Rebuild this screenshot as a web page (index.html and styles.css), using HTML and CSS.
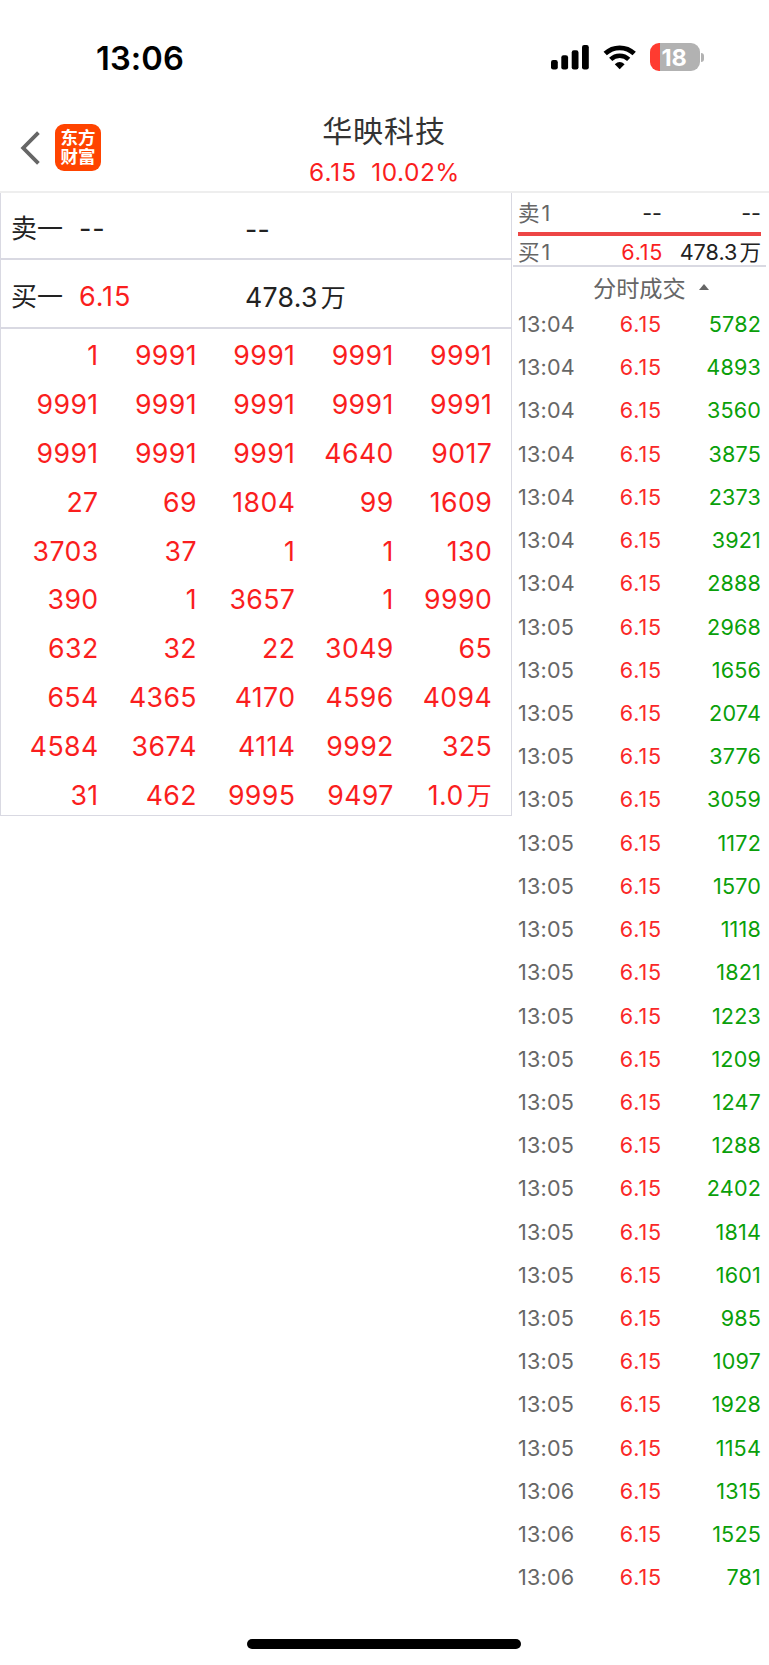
FILE: index.html
```html
<!DOCTYPE html>
<html lang="zh-CN">
  <head>
    <meta charset="utf-8">
    <title>华映科技</title>
    <link rel="stylesheet" href="styles.css">
  </head>
  <body>
    <div class="status-bar">
      <span class="clock">13:06</span>
      <div class="status-icons">
        <svg class="signal" width="38" height="25" viewBox="0 0 38 25">
          <rect x="0" y="15" width="6.8" height="9.4" rx="2.2"/>
          <rect x="10.3" y="10.3" width="6.8" height="14.1" rx="2.2"/>
          <rect x="20.7" y="5.3" width="6.8" height="19.1" rx="2.2"/>
          <rect x="31" y="0" width="6.8" height="24.4" rx="2.2"/>
        </svg>
        <svg class="wifi" width="34" height="25" viewBox="0 0 34 25">
          <path d="M2.2 8.6 A21 21 0 0 1 31.2 8.6" fill="none" stroke="#000" stroke-width="4.8"/>
          <path d="M7.7 14.4 A13 13 0 0 1 25.7 14.4" fill="none" stroke="#000" stroke-width="4.6"/>
          <path d="M11.8 19.2 Q16.7 14.8 21.6 19.2 L16.7 24.2 Z"/>
        </svg>
        <div class="battery"><span>18</span></div>
        <div class="battery-cap"></div>
      </div>
    </div>

    <div class="header">
      <div class="header-left">
        <svg class="back" width="20" height="36" viewBox="0 0 20 36">
          <path d="M18.4 2.6 L3.2 18 L18.4 33.4" fill="none" stroke="#666" stroke-width="3.8"/>
        </svg>
        <div class="logo">东方<br>财富</div>
      </div>
      <div class="title">
        <div class="name">华映科技</div>
        <div class="quote"><span class="last">6.15</span><span>10.02%</span></div>
      </div>
    </div>

    <div class="content">
      <div class="queue">
        <div class="level"><span class="side">卖一</span><span class="price none">--</span><span class="volume">--</span></div>
        <div class="level"><span class="side">买一</span><span class="price">6.15</span><span class="volume">478.3<i>万</i></span></div>
        <div class="orders">
          <span>1</span><span>9991</span><span>9991</span><span>9991</span><span>9991</span>
          <span>9991</span><span>9991</span><span>9991</span><span>9991</span><span>9991</span>
          <span>9991</span><span>9991</span><span>9991</span><span>4640</span><span>9017</span>
          <span>27</span><span>69</span><span>1804</span><span>99</span><span>1609</span>
          <span>3703</span><span>37</span><span>1</span><span>1</span><span>130</span>
          <span>390</span><span>1</span><span>3657</span><span>1</span><span>9990</span>
          <span>632</span><span>32</span><span>22</span><span>3049</span><span>65</span>
          <span>654</span><span>4365</span><span>4170</span><span>4596</span><span>4094</span>
          <span>4584</span><span>3674</span><span>4114</span><span>9992</span><span>325</span>
          <span>31</span><span>462</span><span>9995</span><span>9497</span><span>1.0<i>万</i></span>
        </div>
      </div>

      <div class="ticks">
        <div class="best sell"><span>卖<i>1</i></span><span>--</span><span>--</span></div>
        <div class="ratio"></div>
        <div class="best buy"><span>买<i>1</i></span><span class="up">6.15</span><span>478.3<i>万</i></span></div>
        <div class="ticks-title">分时成交<span class="arrow"></span></div>
        <div class="tick"><span>13:04</span><span>6.15</span><span>5782</span></div>
        <div class="tick"><span>13:04</span><span>6.15</span><span>4893</span></div>
        <div class="tick"><span>13:04</span><span>6.15</span><span>3560</span></div>
        <div class="tick"><span>13:04</span><span>6.15</span><span>3875</span></div>
        <div class="tick"><span>13:04</span><span>6.15</span><span>2373</span></div>
        <div class="tick"><span>13:04</span><span>6.15</span><span>3921</span></div>
        <div class="tick"><span>13:04</span><span>6.15</span><span>2888</span></div>
        <div class="tick"><span>13:05</span><span>6.15</span><span>2968</span></div>
        <div class="tick"><span>13:05</span><span>6.15</span><span>1656</span></div>
        <div class="tick"><span>13:05</span><span>6.15</span><span>2074</span></div>
        <div class="tick"><span>13:05</span><span>6.15</span><span>3776</span></div>
        <div class="tick"><span>13:05</span><span>6.15</span><span>3059</span></div>
        <div class="tick"><span>13:05</span><span>6.15</span><span>1172</span></div>
        <div class="tick"><span>13:05</span><span>6.15</span><span>1570</span></div>
        <div class="tick"><span>13:05</span><span>6.15</span><span>1118</span></div>
        <div class="tick"><span>13:05</span><span>6.15</span><span>1821</span></div>
        <div class="tick"><span>13:05</span><span>6.15</span><span>1223</span></div>
        <div class="tick"><span>13:05</span><span>6.15</span><span>1209</span></div>
        <div class="tick"><span>13:05</span><span>6.15</span><span>1247</span></div>
        <div class="tick"><span>13:05</span><span>6.15</span><span>1288</span></div>
        <div class="tick"><span>13:05</span><span>6.15</span><span>2402</span></div>
        <div class="tick"><span>13:05</span><span>6.15</span><span>1814</span></div>
        <div class="tick"><span>13:05</span><span>6.15</span><span>1601</span></div>
        <div class="tick"><span>13:05</span><span>6.15</span><span>985</span></div>
        <div class="tick"><span>13:05</span><span>6.15</span><span>1097</span></div>
        <div class="tick"><span>13:05</span><span>6.15</span><span>1928</span></div>
        <div class="tick"><span>13:05</span><span>6.15</span><span>1154</span></div>
        <div class="tick"><span>13:06</span><span>6.15</span><span>1315</span></div>
        <div class="tick"><span>13:06</span><span>6.15</span><span>1525</span></div>
        <div class="tick"><span>13:06</span><span>6.15</span><span>781</span></div>
      </div>
    </div>
    <div class="home-indicator"></div>
  </body>
</html>
```

FILE: styles.css
```css
* {
  box-sizing: border-box;
}
body {
  margin: 0;
  width: 769px;
  height: 1665px;
  overflow: hidden;
  background: #fff;
  color: #222;
  font-family: Inter, "Noto Sans CJK SC", sans-serif;
}
i {
  font-style: normal;
}

/* status bar */
.status-bar {
  display: flex;
  justify-content: space-between;
  height: 115px;
  padding: 43px 65px 0 96px;
  color: #000;
}
.clock {
  font-size: 32.7px;
  font-weight: 600;
  line-height: 31px;
  letter-spacing: 0.1px;
}
.status-icons {
  display: flex;
  align-items: flex-start;
}
.signal {
  margin-top: 2px;
}
.wifi {
  margin: 2px 13px 0 14px;
}
.battery {
  width: 50px;
  height: 28px;
  border-radius: 9px;
  background: linear-gradient(to right, #ff3b30 10px, #b2b2b2 10px);
  color: #fff;
  font-size: 23.5px;
  font-weight: 700;
  line-height: 29px;
  text-align: center;
  letter-spacing: -0.3px;
}
.battery span {
  margin-right: 2px;
}
.battery-cap {
  width: 3px;
  height: 9px;
  margin: 10px 0 0 1px;
  border-radius: 0 4px 4px 0;
  background: #b2b2b2;
}

/* header */
.header {
  display: grid;
  grid-template-columns: 200px 1fr 200px;
  height: 78px;
  border-bottom: 2px solid #eee;
}
.header-left {
  display: flex;
  align-items: flex-start;
  padding: 9px 0 0 20px;
}
.back {
  margin-top: 6px;
}
.logo {
  width: 46px;
  height: 47px;
  margin-left: 15px;
  padding-top: 4px;
  border-radius: 9px;
  background: #ff4400;
  color: #fff;
  font-size: 17.5px;
  font-weight: 700;
  line-height: 19px;
  text-align: center;
}
.title {
  text-align: center;
}
.name {
  height: 38px;
  margin-right: 1px;
  color: #333;
  font-size: 30px;
  line-height: 32px;
  letter-spacing: 0.9px;
}
.quote {
  display: flex;
  justify-content: center;
  gap: 14px;
  color: #fa1e1e;
  font-size: 24.5px;
  line-height: 39px;
  letter-spacing: 0.5px;
}
.last {
  letter-spacing: 1px;
}

.content {
  display: flex;
  align-items: flex-start;
}

/* order queue */
.queue {
  width: 512px;
  height: 623px;
  border: 1px solid #d9d9e2;
  border-top: 0;
  overflow: hidden;
}
.level {
  display: flex;
  height: 69px;
  padding: 4px 0 0 10px;
  border-bottom: 2px solid #d9d9e2;
  font-size: 26px;
  line-height: 66px;
}
.level:first-child {
  height: 67px;
  padding-top: 3px;
}
.side {
  width: 68px;
}
.price {
  width: 166px;
  color: #fa1e1e;
  font-size: 27px;
  letter-spacing: 0.9px;
}
.price.none {
  color: #222;
}
.volume {
  font-size: 26.7px;
  letter-spacing: 0.3px;
}
.volume i,
.orders i {
  margin-left: 3px;
  font-size: 25px;
}
.orders {
  display: grid;
  grid-template-columns: 97.6px repeat(4, 98.4px);
  grid-auto-rows: 48.9px;
  padding-top: 2px;
  color: #fa1e1e;
  font-size: 26.7px;
  line-height: 49px;
  letter-spacing: 0.4px;
  text-align: right;
}

/* trades */
.ticks {
  width: 257px;
  padding-left: 1px;
}
.best,
.tick {
  display: grid;
  grid-template-columns: 61px 83px 99px;
  padding-left: 5px;
  font-size: 21.6px;
  text-align: right;
}
.best > span:first-child,
.tick > span:first-child {
  color: #666;
  text-align: left;
}
.best i {
  margin-left: 2px;
}
.sell {
  height: 39px;
  line-height: 40px;
}
.ratio {
  height: 4px;
  margin: 0 8px 0 5px;
  background: #ed4545;
}
.buy {
  height: 31px;
  margin-right: 3px;
  border-bottom: 2px solid #d9d9e2;
  line-height: 33px;
}
.best .up {
  margin-right: -1px;
  color: #fa1e1e;
  letter-spacing: 0.7px;
}
.ticks-title {
  display: flex;
  align-items: center;
  height: 36px;
  padding: 4px 0 0 80px;
  color: #666;
  font-size: 23.2px;
}
.arrow {
  margin-left: 13px;
  border: 5px solid transparent;
  border-top: 0;
  border-bottom: 6px solid #666;
}
.tick {
  height: 43.23px;
  grid-template-columns: 61px 83px 99px;
  line-height: 43px;
}
.tick > span:first-child {
  letter-spacing: 0.2px;
}
.tick > span:nth-child(2) {
  color: #fa2828;
  letter-spacing: 0.8px;
}
.tick > span:nth-child(3) {
  color: #0a9f0a;
  letter-spacing: 0.15px;
}

.home-indicator {
  position: absolute;
  left: 247px;
  top: 1639px;
  width: 274px;
  height: 10px;
  border-radius: 5px;
  background: #000;
}
```
